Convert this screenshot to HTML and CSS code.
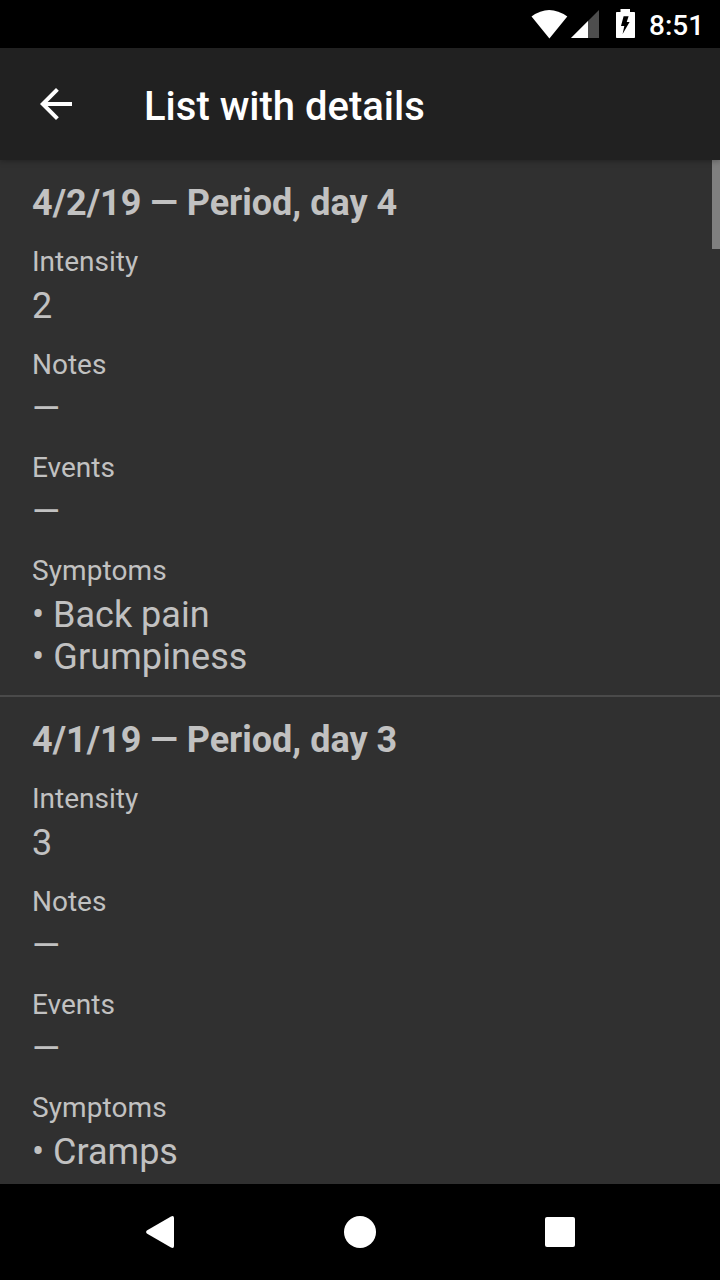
FILE: index.html
```html
<!DOCTYPE html>
<html lang="en">
<head>
<meta charset="utf-8">
<title>List with details</title>
<link rel="stylesheet" href="styles.css">
</head>
<body>
<div class="screen">
  <div class="status">
    <svg class="status-icons" width="112" height="48" viewBox="528 0 112 48">
      <path fill="#fff" d="M531.500 16.500Q549 3.500 567.300 16.500L549.400 38.500Z"/>
      <path fill="#4d4d4d" d="M599 10V38H571Z"/>
      <path fill="#fff" d="M588 21V38H571Z"/>
      <path fill="#fff" fill-rule="evenodd" d="M620.500 9h9.500v3h4.200q.8 0 .8.8v24.400q0 .8-.8.8h-17.400q-.8 0-.8-.8V12.800q0-.8.8-.8h3.700ZM623.600 16.300h5l-1.900 5.700h2.900L622.600 34l1.700-8H621Z"/>
    </svg>
    <span class="clock">8:51</span>
  </div>
  <header class="toolbar">
    <svg class="back" width="32" height="32" viewBox="4 4 16 16"><path fill="#fff" d="M20 11H7.830l5.590-5.590L12 4l-8 8 8 8 1.410-1.410L7.830 13H20z"/></svg>
    <h1 class="title">List with details</h1>
  </header>
  <main class="list">
    <article class="entry">
      <h2 class="heading">4/2/19 — Period, day 4</h2>
      <p class="label">Intensity</p><p class="value">2</p>
      <p class="label">Notes</p><p class="value">—</p>
      <p class="label">Events</p><p class="value">—</p>
      <p class="label wide">Symptoms</p><p class="value">• Back pain<br><span class="wide">• Grumpiness</span></p>
    </article>
    <article class="entry">
      <h2 class="heading">4/1/19 — Period, day 3</h2>
      <p class="label">Intensity</p><p class="value">3</p>
      <p class="label">Notes</p><p class="value">—</p>
      <p class="label">Events</p><p class="value">—</p>
      <p class="label wide">Symptoms</p><p class="value">• Cramps</p>
    </article>
    <div class="scrollbar"></div>
  </main>
  <nav class="navbar">
    <svg width="32" height="34" viewBox="0 0 32 34"><path fill="#fff" d="M2.800 15.500L27 1.500Q30 .2 30 3V31Q30 33.800 27 32.500L2.800 18.500Q1.200 17 2.800 15.500Z"/></svg>
    <svg width="32" height="34" viewBox="0 0 32 34"><circle cx="16" cy="17" r="16" fill="#fff"/></svg>
    <svg width="32" height="34" viewBox="0 0 32 34"><rect x="1" y="2" width="30" height="30" rx="2" fill="#fff"/></svg>
  </nav>
</div>
</body>
</html>
```
FILE: styles.css
```css
* { box-sizing: border-box; }
body { margin: 0; background: #000; font-family: Roboto, sans-serif; }
h1, h2, p { margin: 0; }
svg { display: block; }
.screen { width: 720px; height: 1280px; display: flex; flex-direction: column; overflow: hidden; }
.status { height: 48px; display: flex; justify-content: flex-end; padding-right: 17px; background: #000; }
.clock { width: 54px; margin-left: 9px; font-size: 28px; font-weight: 500; line-height: 51px; color: #fff; white-space: nowrap; }
.toolbar { position: relative; z-index: 1; height: 112px; flex: none; display: flex; align-items: center; padding-left: 40px; background: #212121; box-shadow: 0 1px 6px rgba(0, 0, 0, .3); }
.title { margin-left: 72px; padding-top: 5px; font-size: 40px; font-weight: 500; line-height: 48px; color: #fff; white-space: nowrap; }
.list { position: relative; flex: 1; min-height: 0; overflow: hidden; background: #303030; color: #c1c1c1; }
.entry { height: 537px; padding: 22px 32px 0; border-bottom: 2px solid #4a4a4a; }
.heading { margin-bottom: 21px; font-size: 36px; font-weight: 700; line-height: 42px; }
.label { margin-bottom: 6px; font-size: 28px; line-height: 34px; }
.value { margin-bottom: 21px; font-size: 36px; line-height: 42px; }
.wide { letter-spacing: .1px; }
.scrollbar { position: absolute; top: 0; right: 0; width: 8px; height: 89px; background: #7f7f7f; }
.navbar { height: 96px; flex: none; display: flex; justify-content: space-between; align-items: center; padding: 0 144px; background: #000; }
```
